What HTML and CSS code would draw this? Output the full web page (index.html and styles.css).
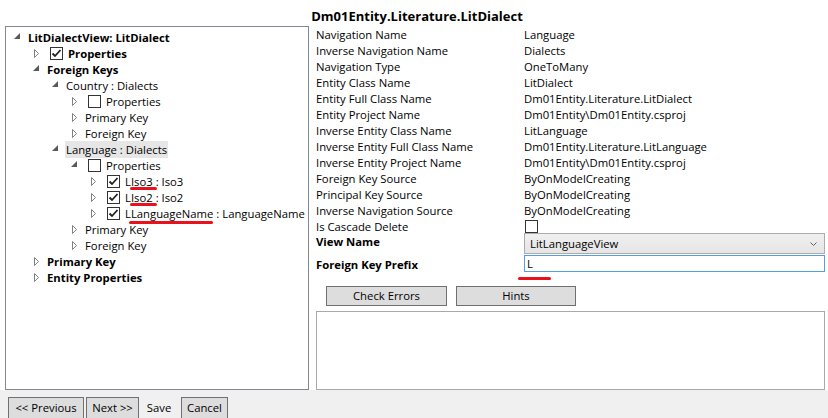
FILE: index.html
```html
<!DOCTYPE html>
<html>
<head>
<meta charset="utf-8">
<link rel="stylesheet" href="styles.css">
</head>
<body>
<div class="window">
  <div class="title">Dm01Entity.Literature.LitDialect</div>
  <div class="main">
    <div class="tree">
      <div class="row"><span class="tg"><svg class="exp" width="6" height="6" viewBox="0 0 6 6"><path d="M6 0 L6 6 L0 6 Z"/></svg></span><span class="lbl b">LitDialectView: LitDialect</span></div>
      <div class="kids">
        <div class="row"><span class="tg"><svg class="col" width="6" height="9" viewBox="0 0 6 9"><path d="M0.5 0.5 L0.5 8.5 L4.5 4.5 Z"/></svg></span><span class="cb on"><svg width="11" height="11" viewBox="0 0 11 11"><path d="M1.5 5.5 L4 8 L9.5 2"/></svg></span><span class="lbl b">Properties</span></div>
        <div class="row"><span class="tg"><svg class="exp" width="6" height="6" viewBox="0 0 6 6"><path d="M6 0 L6 6 L0 6 Z"/></svg></span><span class="lbl b">Foreign Keys</span></div>
        <div class="kids">
          <div class="row"><span class="tg"><svg class="exp" width="6" height="6" viewBox="0 0 6 6"><path d="M6 0 L6 6 L0 6 Z"/></svg></span><span class="lbl">Country : Dialects</span></div>
          <div class="kids">
            <div class="row"><span class="tg"><svg class="col" width="6" height="9" viewBox="0 0 6 9"><path d="M0.5 0.5 L0.5 8.5 L4.5 4.5 Z"/></svg></span><span class="cb"></span><span class="lbl">Properties</span></div>
            <div class="row"><span class="tg"><svg class="col" width="6" height="9" viewBox="0 0 6 9"><path d="M0.5 0.5 L0.5 8.5 L4.5 4.5 Z"/></svg></span><span class="lbl">Primary Key</span></div>
            <div class="row"><span class="tg"><svg class="col" width="6" height="9" viewBox="0 0 6 9"><path d="M0.5 0.5 L0.5 8.5 L4.5 4.5 Z"/></svg></span><span class="lbl">Foreign Key</span></div>
          </div>
          <div class="row"><span class="tg"><svg class="exp" width="6" height="6" viewBox="0 0 6 6"><path d="M6 0 L6 6 L0 6 Z"/></svg></span><span class="lbl sel">Language : Dialects</span></div>
          <div class="kids">
            <div class="row"><span class="tg"><svg class="exp" width="6" height="6" viewBox="0 0 6 6"><path d="M6 0 L6 6 L0 6 Z"/></svg></span><span class="cb"></span><span class="lbl">Properties</span></div>
            <div class="kids">
              <div class="row"><span class="tg"><svg class="col" width="6" height="9" viewBox="0 0 6 9"><path d="M0.5 0.5 L0.5 8.5 L4.5 4.5 Z"/></svg></span><span class="cb on"><svg width="11" height="11" viewBox="0 0 11 11"><path d="M1.5 5.5 L4 8 L9.5 2"/></svg></span><span class="lbl">LIso3 : Iso3<span class="mark m1"></span></span></div>
              <div class="row"><span class="tg"><svg class="col" width="6" height="9" viewBox="0 0 6 9"><path d="M0.5 0.5 L0.5 8.5 L4.5 4.5 Z"/></svg></span><span class="cb on"><svg width="11" height="11" viewBox="0 0 11 11"><path d="M1.5 5.5 L4 8 L9.5 2"/></svg></span><span class="lbl">LIso2 : Iso2<span class="mark m2"></span></span></div>
              <div class="row"><span class="tg"><svg class="col" width="6" height="9" viewBox="0 0 6 9"><path d="M0.5 0.5 L0.5 8.5 L4.5 4.5 Z"/></svg></span><span class="cb on"><svg width="11" height="11" viewBox="0 0 11 11"><path d="M1.5 5.5 L4 8 L9.5 2"/></svg></span><span class="lbl">LLanguageName : LanguageName<span class="mark m3"></span></span></div>
            </div>
            <div class="row"><span class="tg"><svg class="col" width="6" height="9" viewBox="0 0 6 9"><path d="M0.5 0.5 L0.5 8.5 L4.5 4.5 Z"/></svg></span><span class="lbl">Primary Key</span></div>
            <div class="row"><span class="tg"><svg class="col" width="6" height="9" viewBox="0 0 6 9"><path d="M0.5 0.5 L0.5 8.5 L4.5 4.5 Z"/></svg></span><span class="lbl">Foreign Key</span></div>
          </div>
        </div>
        <div class="row"><span class="tg"><svg class="col" width="6" height="9" viewBox="0 0 6 9"><path d="M0.5 0.5 L0.5 8.5 L4.5 4.5 Z"/></svg></span><span class="lbl b">Primary Key</span></div>
        <div class="row"><span class="tg"><svg class="col" width="6" height="9" viewBox="0 0 6 9"><path d="M0.5 0.5 L0.5 8.5 L4.5 4.5 Z"/></svg></span><span class="lbl b">Entity Properties</span></div>
      </div>
    </div>
    <div class="details">
      <div class="props">
        <div>Navigation Name</div><div>Language</div>
        <div>Inverse Navigation Name</div><div>Dialects</div>
        <div>Navigation Type</div><div>OneToMany</div>
        <div>Entity Class Name</div><div>LitDialect</div>
        <div>Entity Full Class Name</div><div>Dm01Entity.Literature.LitDialect</div>
        <div>Entity Project Name</div><div>Dm01Entity\Dm01Entity.csproj</div>
        <div>Inverse Entity Class Name</div><div>LitLanguage</div>
        <div>Inverse Entity Full Class Name</div><div>Dm01Entity.Literature.LitLanguage</div>
        <div>Inverse Entity Project Name</div><div>Dm01Entity\Dm01Entity.csproj</div>
        <div>Foreign Key Source</div><div>ByOnModelCreating</div>
        <div>Principal Key Source</div><div>ByOnModelCreating</div>
        <div>Inverse Navigation Source</div><div>ByOnModelCreating</div>
        <div>Is Cascade Delete</div><div class="cbcell"><span class="cb"></span></div>
      </div>
      <div class="edit view">
        <div class="elabel">View Name</div>
        <div class="combo"><span>LitLanguageView</span><svg width="7" height="4" viewBox="0 0 7 4"><path d="M0.5 0.5 L3.5 3.5 L6.5 0.5"/></svg></div>
      </div>
      <div class="edit prefix">
        <div class="elabel">Foreign Key Prefix</div>
        <div class="textbox">L</div>
      </div>
      <div class="markrow"><span class="line"></span></div>
      <div class="actions">
        <button class="btn check">Check Errors</button>
        <button class="btn hints">Hints</button>
      </div>
      <div class="errors"></div>
    </div>
  </div>
  <div class="footer">
    <button class="btn prev">&lt;&lt; Previous</button>
    <button class="btn next">Next &gt;&gt;</button>
    <button class="btn flat">Save</button>
    <button class="btn cancel">Cancel</button>
  </div>
</div>
</body>
</html>
```
FILE: styles.css
```css
* { box-sizing: border-box; }
body {
  margin: 0;
  font-family: "Open Sans", "Noto Sans", sans-serif;
  font-size: 11.3px;
  color: #000;
  background: #fff;
}
.window {
  width: 828px;
  height: 418px;
  display: flex;
  flex-direction: column;
  overflow: hidden;
}
.title {
  height: 27px;
  padding: 6px 0 0 6px;
  line-height: 20px;
  font-size: 13px;
  font-weight: bold;
  text-align: center;
}
.main {
  height: 364px;
  display: flex;
}
.tree {
  margin-left: 5px;
  width: 304px;
  height: 364px;
  border: 1px solid #828790;
  padding: 2px 0 0 2px;
  overflow: hidden;
}
.row {
  height: 16px;
  display: flex;
  align-items: center;
  white-space: nowrap;
}
.kids { padding-left: 19px; }
.tg {
  width: 19px;
  height: 16px;
  flex: none;
  display: flex;
  align-items: center;
  justify-content: center;
}
.tg .exp { margin-top: -2px; margin-left: -2px; }
.tg .exp path { fill: #595959; stroke: none; }
.tg .col path { fill: #fff; stroke: #818181; stroke-width: 1; }
.lbl {
  position: relative;
  line-height: 16px;
  padding: 1px 1px 0 1px;
}
.lbl.b { font-weight: bold; }
.lbl.sel { background: #e6e6e6; }
.cb {
  width: 13px;
  height: 13px;
  flex: none;
  border: 1px solid #333;
  background: #fff;
  margin: 0 4px 0 4px;
  display: flex;
  align-items: center;
  justify-content: center;
}
.cb svg path { fill: none; stroke: #212121; stroke-width: 1.8; }
.mark {
  position: absolute;
  height: 3px;
  border-radius: 2px;
  background: #e8111c;
}
.m1 { left: 6px; top: 14px; width: 27px; }
.m2 { left: 6px; top: 14px; width: 27px; }
.m3 { left: 5px; top: 16px; width: 84px; }

.details {
  flex: 1;
  margin: 0 3px 0 7px;
  display: flex;
  flex-direction: column;
}
.props {
  display: grid;
  grid-template-columns: 208px 1fr;
  grid-auto-rows: 16px;
  line-height: 16px;
  white-space: nowrap;
}
.props > div { padding-top: 1px; }
.props > .cbcell { padding-top: 0; }
.cbcell { display: flex; align-items: center; }
.cbcell .cb { margin: 0 0 0 1px; }
.edit {
  display: grid;
  grid-template-columns: 208px 1fr;
}
.view { margin-top: -1px; }
.prefix { margin-top: 1px; }
.elabel {
  font-weight: bold;
  line-height: 16px;
  padding-top: 1px;
}
.prefix .elabel { line-height: 17px; }
.combo {
  height: 21px;
  border: 1px solid #acacac;
  background: linear-gradient(#f0f0f0, #e5e5e5);
  display: flex;
  align-items: center;
  justify-content: space-between;
  padding: 0 7px 0 5px;
}
.combo svg path { fill: none; stroke: #606060; stroke-width: 1; }
.textbox {
  height: 17px;
  border: 1px solid #569de5;
  line-height: 15px;
  padding-left: 2px;
  background: #fff;
}
.markrow {
  height: 3px;
  margin-top: 4px;
  display: flex;
}
.markrow .line {
  margin-left: 202px;
  width: 33px;
  height: 3px;
  border-radius: 2px;
  background: #e8111c;
}
.actions {
  margin-top: 6px;
  display: flex;
  gap: 9px;
  padding-left: 10px;
}
.btn {
  font-family: inherit;
  font-size: 11.3px;
  color: #000;
  background: #dddddd;
  border: 1px solid #707070;
  height: 20px;
  padding: 0;
  line-height: 16px;
  margin: 0;
  white-space: nowrap;
}
.check { width: 121px; }
.hints { width: 120px; }
.errors {
  margin-top: 5px;
  flex: 1;
  border: 1px solid #a9a9a9;
}
.footer {
  flex: 1;
  background: #f0f0f0;
  padding: 7px 0 0 8px;
  display: flex;
  align-items: flex-start;
  gap: 2px;
}
.footer .btn { height: 22px; line-height: 18px; }
.prev { width: 76px; }
.next { width: 53px; }
.flat { background: transparent; border-color: transparent; width: 36px; }
.cancel { margin-left: 2px; width: 47px; }
```
